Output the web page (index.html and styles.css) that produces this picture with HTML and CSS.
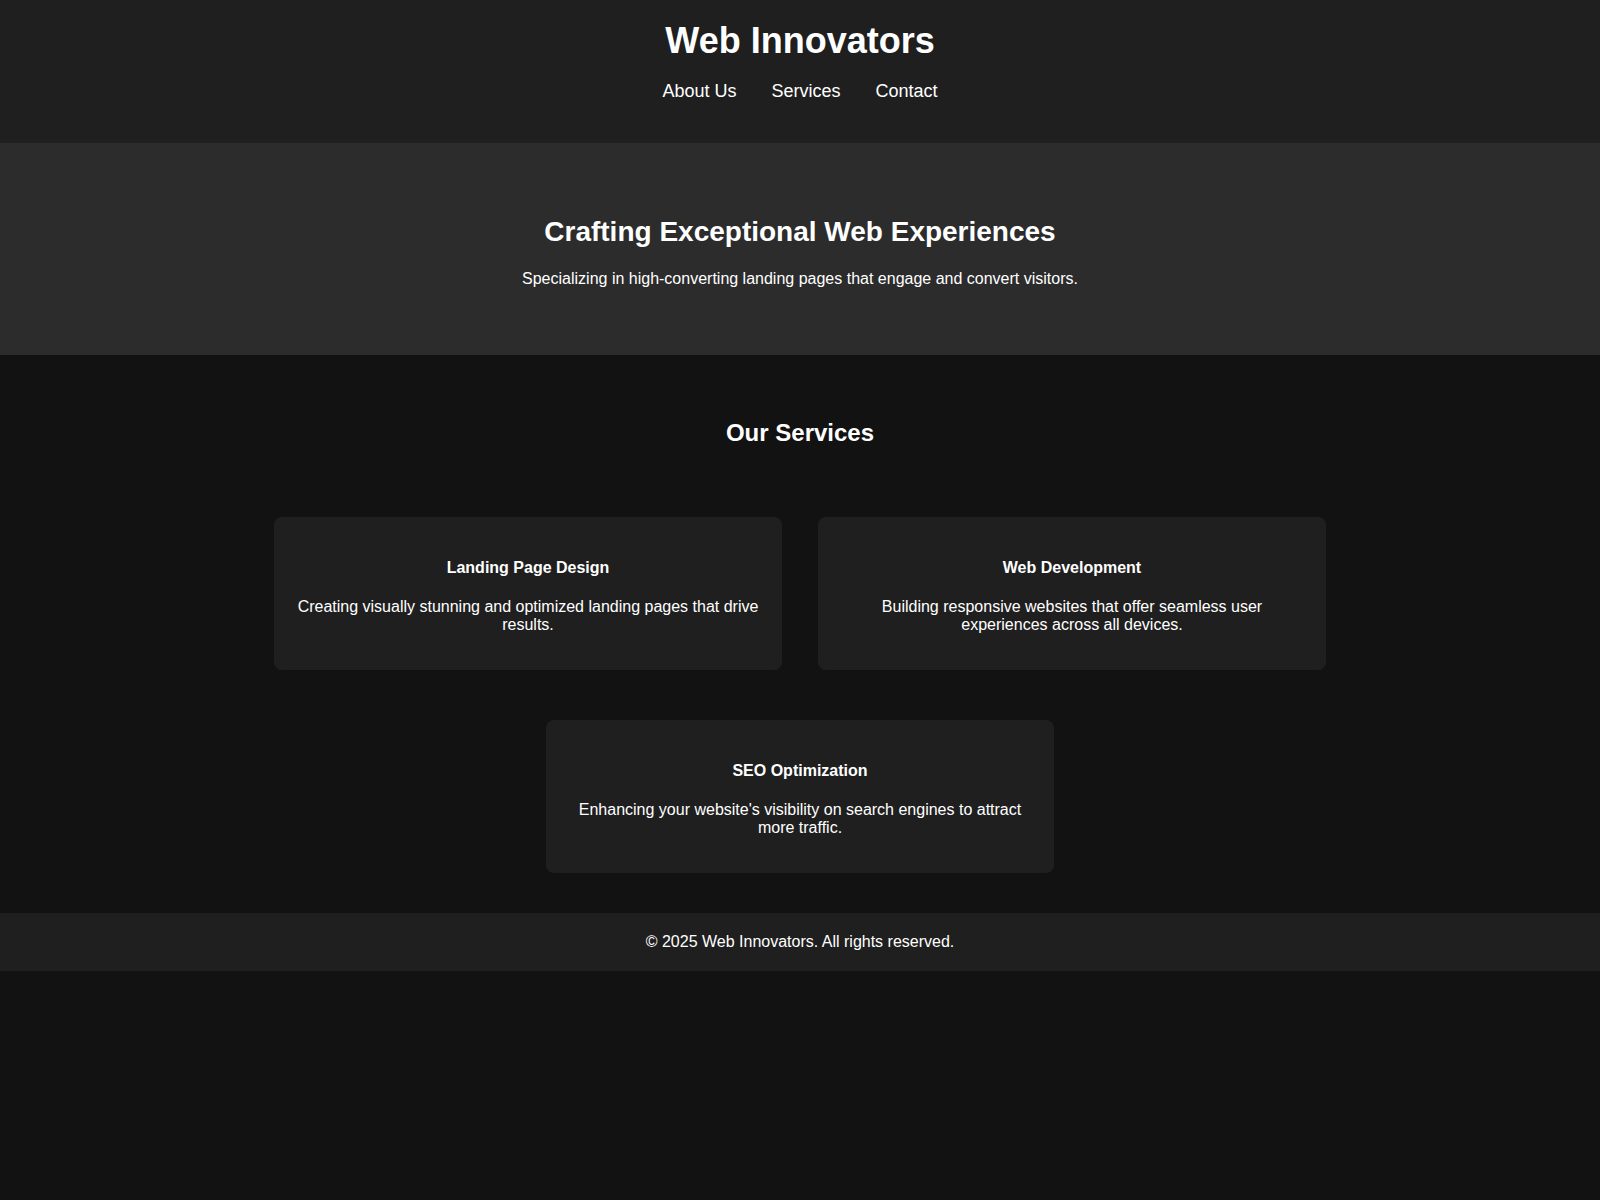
FILE: index.html
```html
<!DOCTYPE html>
<html lang="en">
<head>
<meta charset="utf-8">
<title>Web Innovators</title>
<link rel="stylesheet" href="styles.css">
</head>
<body>
<header class="site-header">
  <h1 class="brand">Web Innovators</h1>
  <nav class="nav">
    <a href="#about">About Us</a>
    <a href="#services">Services</a>
    <a href="#contact">Contact</a>
  </nav>
</header>
<section class="hero">
  <h2 class="hero-title">Crafting Exceptional Web Experiences</h2>
  <p class="hero-text">Specializing in high-converting landing pages that engage and convert visitors.</p>
</section>
<section class="services" id="services">
  <h2 class="section-title">Our Services</h2>
  <div class="cards">
    <div class="card">
      <h4 class="card-title">Landing Page Design</h4>
      <p class="card-text">Creating visually stunning and optimized landing pages that drive results.</p>
    </div>
    <div class="card">
      <h4 class="card-title">Web Development</h4>
      <p class="card-text">Building responsive websites that offer seamless user experiences across all devices.</p>
    </div>
    <div class="card">
      <h4 class="card-title">SEO Optimization</h4>
      <p class="card-text">Enhancing your website's visibility on search engines to attract more traffic.</p>
    </div>
  </div>
</section>
<footer class="site-footer">
  <p class="footer-text">&copy; 2025 Web Innovators. All rights reserved.</p>
</footer>
</body>
</html>
```

FILE: styles.css
```css
html, body {
  margin: 0;
  padding: 0;
}

body {
  background: #121212;
  color: #ffffff;
  font-family: "Liberation Sans", Arial, sans-serif;
  font-size: 16px;
}

.site-header {
  background: #1f1f1f;
  text-align: center;
  padding: 20px 0 21px;
}

.brand {
  margin: 0 0 20px;
  font-size: 36px;
  line-height: 41px;
  font-weight: bold;
}

.nav {
  display: flex;
  justify-content: center;
  gap: 35px;
  margin-bottom: 20px;
  font-size: 18px;
  line-height: 21px;
}

.nav a {
  color: #ffffff;
  text-decoration: none;
}

.hero {
  background: #2c2c2c;
  text-align: center;
  padding: 73px 20px 67px;
}

.hero-title {
  margin: 0 0 22px;
  font-size: 28px;
  line-height: 32px;
  font-weight: bold;
}

.hero-text {
  margin: 0;
  font-size: 16px;
  line-height: 18px;
}

.services {
  padding: 64px 0 40px;
  text-align: center;
}

.section-title {
  margin: 0 0 70px;
  font-size: 24px;
  line-height: 28px;
  font-weight: bold;
}

.cards {
  display: flex;
  flex-wrap: wrap;
  justify-content: center;
  column-gap: 36px;
  row-gap: 50px;
  width: 1052px;
  margin: 0 auto;
}

.card {
  width: 508px;
  box-sizing: border-box;
  background: #1f1f1f;
  border-radius: 8px;
  padding: 20px;
  text-align: center;
}

.card-title {
  margin: 22px 0 21px;
  font-size: 16px;
  line-height: 18px;
  font-weight: bold;
}

.card-text {
  margin: 0 0 16px;
  font-size: 16px;
  line-height: 18px;
}

.site-footer {
  background: #1f1f1f;
  text-align: center;
  padding: 20px 0;
}

.footer-text {
  margin: 0;
  font-size: 16px;
  line-height: 18px;
}
```
